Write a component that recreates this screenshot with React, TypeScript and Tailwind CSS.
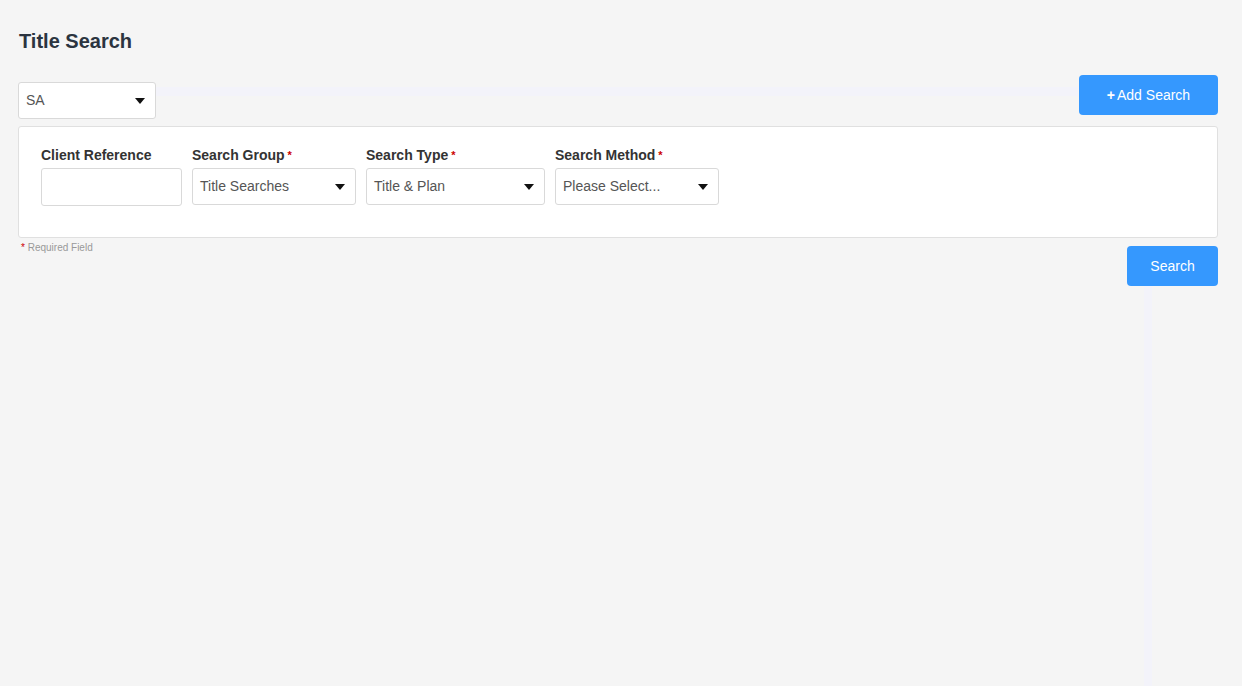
const Caret = () => (
  <svg width="10" height="6" viewBox="0 0 10 6" className="shrink-0">
    <path d="M0 0 L10 0 L5 6 Z" fill="#111" />
  </svg>
);

type SelectProps = { value: string; width: string; height?: string };

const FakeSelect = ({ value, width, height = "h-[37px]" }: SelectProps) => (
  <div
    className={`${width} ${height} flex items-center justify-between rounded-[3px] border border-[#d9d9d9] bg-white pl-[7px] pr-[10px] text-[14px] text-[#555]`}
  >
    <span>{value}</span>
    <Caret />
  </div>
);

const Label = ({ text, required }: { text: string; required?: boolean }) => (
  <div className="mb-[4px] flex items-center text-[14px] font-bold text-[#333] leading-[18px]">
    {text}
    {required && <span className="ml-[3px] text-[11px] text-[#c00]">*</span>}
  </div>
);

const App = () => {
  return (
    <div
      className="relative h-[686px] w-[1242px] overflow-hidden bg-[#f5f5f5]"
      style={{ fontFamily: '"Liberation Sans", Arial, sans-serif' }}
    >
      {/* faint artefact strips */}
      <div className="absolute left-[156px] top-[87px] h-[9px] w-[922px] bg-[#f3f3fa]" />
      <div className="absolute left-[1144px] top-[286px] h-[400px] w-[8px] bg-[#f3f3fa]" />

      <div className="relative flex flex-col pl-[18px] pr-[24px] pt-[30px]">
        <h1 className="pl-[1px] text-[20px] font-bold leading-[22px] text-[#2b3440]">Title Search</h1>

        <div className="mt-[23px] flex items-start justify-between">
          <div className="mt-[7px]">
            <FakeSelect value="SA" width="w-[138px]" />
          </div>
          <button className="flex h-[40px] w-[139px] items-center justify-center rounded-[4px] bg-[#3598fe] text-[14px] text-white">
            <span className="mr-[2px] font-bold">+</span>Add Search
          </button>
        </div>

        <div className="mt-[7px] flex h-[112px] gap-[10px] rounded-[3px] border border-[#e0e0e0] bg-white px-[22px] pt-[19px]">
          <div className="flex flex-col">
            <Label text="Client Reference" />
            <div className="h-[38px] w-[141px] rounded-[3px] border border-[#d9d9d9] bg-white" />
          </div>
          <div className="flex flex-col">
            <Label text="Search Group" required />
            <FakeSelect value="Title Searches" width="w-[164px]" />
          </div>
          <div className="flex flex-col">
            <Label text="Search Type" required />
            <FakeSelect value="Title & Plan" width="w-[179px]" />
          </div>
          <div className="flex flex-col">
            <Label text="Search Method" required />
            <FakeSelect value="Please Select..." width="w-[164px]" />
          </div>
        </div>

        <div className="flex items-start justify-between">
          <div className="mt-[4px] pl-[3px] text-[10px] leading-[12px] text-[#999]">
            <span className="text-[#c00]">*</span> Required Field
          </div>
          <button className="mt-[8px] flex h-[40px] w-[91px] items-center justify-center rounded-[4px] bg-[#3598fe] text-[14px] text-white">
            Search
          </button>
        </div>
      </div>
    </div>
  );
};

export default App;
